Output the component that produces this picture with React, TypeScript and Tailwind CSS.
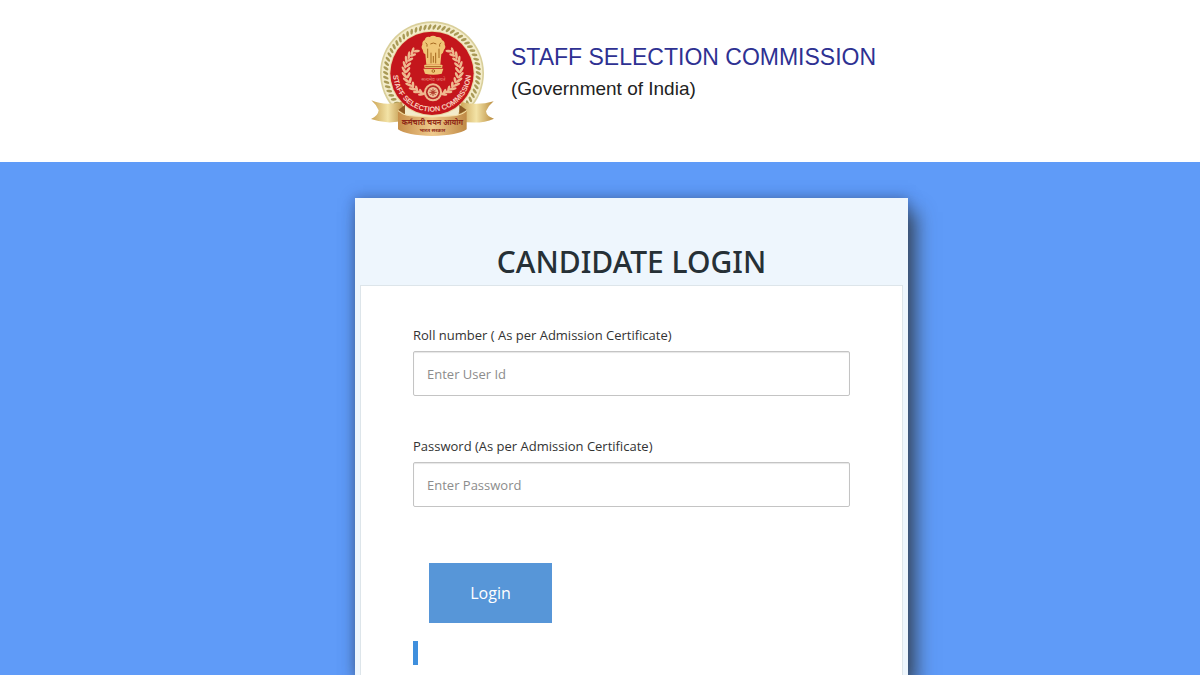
import React from "react";

const beads = Array.from({ length: 46 }, (_, i) => {
  const deg = 140 + (i * 260) / 45;
  return { a: (deg * Math.PI) / 180, deg };
});

const leaves = Array.from({ length: 11 }, (_, i) => 108 + i * 12);

function Emblem() {
  return (
    <svg width="124" height="117" viewBox="33 30 372 351" role="img" aria-label="Staff Selection Commission emblem">
      <defs>
        <linearGradient id="ribbon" x1="0" x2="1" y1="0" y2="0">
          <stop offset="0" stopColor="#c9a050" />
          <stop offset="0.5" stopColor="#f3e3a6" />
          <stop offset="1" stopColor="#b98a3c" />
        </linearGradient>
        <linearGradient id="banner" x1="0" x2="1" y1="0" y2="0">
          <stop offset="0" stopColor="#c78f4a" />
          <stop offset="0.5" stopColor="#efc98c" />
          <stop offset="1" stopColor="#c08a45" />
        </linearGradient>
        <path id="ring-text" d="M 99 188 A 117 117 0 0 0 333 188" />
      </defs>

      <circle cx="216" cy="190" r="156" fill="#d9cf9a" />
      <circle cx="216" cy="190" r="151" fill="#f3eccb" />
      {beads.map(({ a, deg }) => (
        <ellipse
          key={deg}
          cx={216 + 139 * Math.cos(a)}
          cy={190 + 139 * Math.sin(a)}
          rx="9"
          ry="4"
          fill="#a99a56"
          transform={`rotate(${deg + 30} ${216 + 139 * Math.cos(a)} ${190 + 139 * Math.sin(a)})`}
        />
      ))}
      <circle cx="216" cy="190" r="128" fill="#e9d6a0" />
      <circle cx="216" cy="190" r="125" fill="#c4161c" />

      <g fill="#efb98f">
        {leaves.map((deg) => {
          const a = (deg * Math.PI) / 180;
          const x = 78 * Math.cos(a);
          const y = 180 + 76 * Math.sin(a);
          return (
            <g key={deg}>
              <ellipse cx={216 + x - 6} cy={y} rx="12" ry="4" transform={`rotate(${deg + 60} ${216 + x - 6} ${y})`} />
              <ellipse cx={216 + x + 6} cy={y} rx="10" ry="4" transform={`rotate(${deg + 125} ${216 + x + 6} ${y})`} />
              <ellipse cx={220 - x + 6} cy={y} rx="12" ry="4" transform={`rotate(${-deg - 60} ${220 - x + 6} ${y})`} />
              <ellipse cx={220 - x - 6} cy={y} rx="10" ry="4" transform={`rotate(${-deg - 125} ${220 - x - 6} ${y})`} />
            </g>
          );
        })}
      </g>

      <g fill="#f0c676">
        <path d="M194 90 q4 -12 15 -9 q10 -7 21 0 q13 -2 16 9 q9 3 8 14 q5 8 -2 15 q-2 10 -8 14 l-3 31 h-42 l-3 -31 q-7 -4 -8 -14 q-6 -7 -1 -15 q-1 -11 7 -14 z" />
        <rect x="193" y="164" width="54" height="10" rx="2" />
        <path d="M190 176 h60 l-5 15 q-25 6 -50 0 z" />
      </g>
      <g fill="none" stroke="#a5681f" strokeWidth="3">
        <path d="M211 102 q9 -6 18 0 M203 116 v28 M237 116 v28 M213 128 v32 M227 128 v32 M220 138 v20" />
        <path d="M197 98 q6 4 4 12 M243 98 q-6 4 -4 12 M196 170 h48" />
        <circle cx="220" cy="183" r="4" />
      </g>
      <text x="220" y="214" textAnchor="middle" fill="#e68a78" className="font-['Noto_Sans_Devanagari','Noto_Sans',sans-serif] text-[15px]">
        सत्यमेव जयते
      </text>

      <circle cx="219" cy="247" r="27" fill="#efb98f" />
      <circle cx="219" cy="247" r="21" fill="#b52a26" />
      <circle cx="219" cy="247" r="16" fill="#efc19b" />
      <path d="M208 247h22M219 236v22M211 239l16 16M227 239l-16 16" stroke="#b3402f" strokeWidth="3" />
      <circle cx="219" cy="247" r="5" fill="#b3402f" />

      <text fill="#f8cdbb" className="font-['Liberation_Sans'] text-[22px] font-bold">
        <textPath href="#ring-text" startOffset="50%" textAnchor="middle">STAFF SELECTION COMMISSION</textPath>
      </text>

      <path d="M34 271 q42 18 91 4 l10 32 v24 q-55 14 -103 -4 q22 -8 24 -26 q-8 -18 -22 -30 z" fill="url(#ribbon)" />
      <path d="M401 274 q-48 14 -96 2 l-9 32 v24 q60 14 106 -6 q-22 -6 -24 -22 q8 -18 23 -30 z" fill="url(#ribbon)" />
      <path d="M115 300 l20 -16 v28 z M320 300 l-22 -16 v28 z" fill="#8d5b24" />
      <path d="M114 302 q14 13 33 15 q69 8 138 0 q24 -4 35 -15 v56 q-26 18 -104 20 q-76 -2 -102 -20 z" fill="url(#banner)" />
      <path d="M114 302 q14 13 33 15 q69 8 138 0 q24 -4 35 -15" fill="none" stroke="#f6dfa8" strokeWidth="3" />
      <g className="font-['Noto_Sans_Devanagari','Noto_Sans',sans-serif] font-bold" textAnchor="middle" fill="#8f2a18">
        <text x="217" y="345" className="text-[22px]">कर्मचारी चयन आयोग</text>
        <text x="217" y="366" className="text-[15px]">भारत सरकार</text>
      </g>
    </svg>
  );
}

type FieldProps = { id: string; label: string; type: string; placeholder: string };

function Field({ id, label, type, placeholder }: FieldProps) {
  return (
    <div className="flex flex-col">
      <label htmlFor={id} className="text-[13px] leading-8 text-[#333333]">
        {label}
      </label>
      <input
        id={id}
        type={type}
        placeholder={placeholder}
        className="h-[45px] w-full rounded-xs border border-[#c4c4c4] bg-white px-[13px] text-[13px] text-[#333333] shadow-[inset_0_1px_1px_rgba(0,0,0,0.1)] placeholder:text-[#8c8c8c] focus:outline-none"
      />
    </div>
  );
}

export default function App() {
  return (
    <div className="flex min-h-screen flex-col bg-[#5f9bf8] font-['Open_Sans',sans-serif]">
      <header className="bg-white pt-5 pb-6 pl-[63px]">
        <div className="mx-auto flex h-[118px] w-full max-w-[553px] gap-4 pl-4">
          <Emblem />
          <div className="pt-[21px] font-['Liberation_Sans',Arial,sans-serif]">
            <h1 className="text-[23px] leading-8 whitespace-nowrap text-[#2e3192]">STAFF SELECTION COMMISSION</h1>
            <p className="text-[19px] leading-8 text-[#222222]">(Government of India)</p>
          </div>
        </div>
      </header>

      <main className="flex flex-1 flex-col overflow-hidden pt-9 pl-[63px]">
        <section className="mx-auto flex w-full max-w-[553px] flex-1 flex-col bg-[#eef6fd] px-[5px] shadow-[8px_14px_18px_rgba(50,60,70,0.8),0_0_12px_rgba(40,60,110,0.5)]">
          <h2 className="pt-10 text-center font-['Noto_Sans','Open_Sans',sans-serif] text-[30px] leading-[47px] font-medium text-[#263036]">
            CANDIDATE LOGIN
          </h2>
          <form
            className="flex flex-1 flex-col border border-b-0 border-[#dde5ea] bg-white px-[52px] pt-[33px]"
            onSubmit={(e: React.FormEvent) => e.preventDefault()}
          >
            <div className="flex flex-col gap-[34px]">
              <Field id="roll" type="text" label="Roll number ( As per Admission Certificate)" placeholder="Enter User Id" />
              <Field id="password" type="password" label="Password (As per Admission Certificate)" placeholder="Enter Password" />
            </div>
            <button type="submit" className="mt-14 ml-4 h-[60px] w-[123px] bg-[#5796d8] text-base text-white">
              Login
            </button>
            <div className="mt-[18px] h-6 w-[5px] bg-[#3f8fdd]" />
          </form>
        </section>
      </main>
    </div>
  );
}
